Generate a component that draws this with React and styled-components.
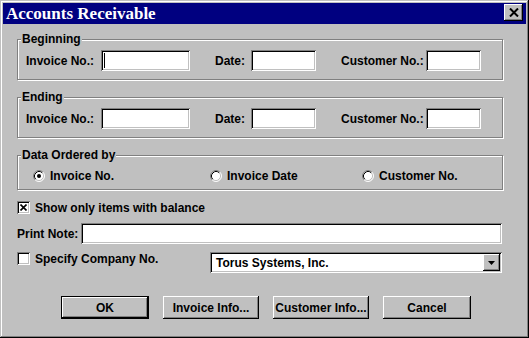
import React from 'react';
import styled, { createGlobalStyle } from 'styled-components';

const GlobalStyle = createGlobalStyle`
  html, body {
    margin: 0;
    padding: 0;
    background: #c0c0c0;
  }
  body {
    font-family: "Liberation Sans", Arial, sans-serif;
  }
`;

const raised = `
  box-shadow: inset -1px -1px #000, inset 1px 1px #fff, inset -2px -2px #808080, inset 2px 2px #c0c0c0;
`;

const sunken = `
  box-shadow: inset 1px 1px #808080, inset -1px -1px #fff, inset 2px 2px #000, inset -2px -2px #c0c0c0;
`;

const Window = styled.div`
  box-sizing: border-box;
  width: 529px;
  height: 338px;
  padding: 3px;
  background: #c0c0c0;
  box-shadow: inset -1px -1px #000, inset 1px 1px #c0c0c0, inset -2px -2px #808080, inset 2px 2px #fff;
  display: flex;
  flex-direction: column;
`;

const TitleBar = styled.div`
  height: 21px;
  background: #000080;
  display: flex;
  align-items: flex-start;
  padding-left: 3px;
`;

const Title = styled.div`
  flex: 1;
  color: #fff;
  font: bold 17px/21px "Liberation Serif", "Times New Roman", serif;
  white-space: nowrap;
`;

const CloseButton = styled.button`
  width: 19px;
  height: 17px;
  margin: 1px 3px 0 0;
  padding: 0;
  border: none;
  background: #c0c0c0;
  display: flex;
  align-items: center;
  justify-content: center;
  ${raised}
`;

const Body = styled.div`
  padding: 15px 23px 0 14px;
  display: flex;
  flex-direction: column;
`;

const Group = styled.section`
  position: relative;
  margin-top: ${(p) => p.$top || 0}px;
  padding: ${(p) => p.$pad};
  border: 1px solid #808080;
  box-shadow: inset 1px 1px #fff, 1px 1px #fff;
`;

const GroupLabel = styled.span`
  position: absolute;
  top: -7px;
  left: 3px;
  padding: 0 1px;
  background: #c0c0c0;
  font-size: 12px;
  font-weight: bold;
  line-height: 13px;
  white-space: nowrap;
`;

const FieldRow = styled.div`
  display: grid;
  grid-template-columns: 75px 114px 36px 90px 85px 55px;
  align-items: center;
  padding-left: 8px;
`;

const Label = styled.span`
  font-size: 12px;
  font-weight: bold;
  line-height: 14px;
  white-space: nowrap;
`;

const TextBox = styled.div`
  position: relative;
  box-sizing: border-box;
  width: ${(p) => (p.$w ? `${p.$w}px` : 'auto')};
  flex: ${(p) => (p.$w ? 'none' : '1')};
  height: 21px;
  background: #fff;
  ${sunken}
`;

const Caret = styled.span`
  position: absolute;
  left: 3px;
  top: 3px;
  width: 1px;
  height: 15px;
  background: #000;
`;

const RadioRow = styled.div`
  display: grid;
  grid-template-columns: 177px 152px auto;
  align-items: center;
  height: 14px;
  padding-left: 15px;
`;

const Option = styled.label`
  display: flex;
  align-items: center;
  gap: 5px;
`;

const CheckItem = styled.label`
  display: flex;
  align-items: center;
  gap: 5px;
  height: 13px;
  margin-top: ${(p) => p.$top || 0}px;
`;

const Box = styled.span`
  box-sizing: border-box;
  width: 13px;
  height: 13px;
  background: #fff;
  display: flex;
  align-items: center;
  justify-content: center;
  ${sunken}
`;

const NoteRow = styled.div`
  display: flex;
  align-items: center;
  gap: 3px;
  margin: 9px 1px 0 0;
`;

const CompanyRow = styled.div`
  display: flex;
  align-items: flex-start;
  justify-content: space-between;
  margin: 8px 1px 0 0;
`;

const Select = styled.div`
  box-sizing: border-box;
  width: 292px;
  height: 21px;
  padding: 0 2px 0 6px;
  background: #fff;
  display: flex;
  align-items: center;
  justify-content: space-between;
  ${sunken}
`;

const DropButton = styled.span`
  box-sizing: border-box;
  width: 17px;
  height: 17px;
  background: #c0c0c0;
  display: flex;
  align-items: center;
  justify-content: center;
  ${raised}
`;

const ButtonRow = styled.div`
  display: flex;
  gap: 14px;
  margin-top: 23px;
  padding-left: 44px;
`;

const Button = styled.button`
  box-sizing: border-box;
  width: ${(p) => p.$w}px;
  height: 23px;
  padding: 0;
  background: #c0c0c0;
  border: ${(p) => (p.$default ? '1px solid #000' : 'none')};
  color: #000;
  font: bold 12px "Liberation Sans", Arial, sans-serif;
  ${raised}
`;

function CloseIcon() {
  return (
    <svg width="10" height="9" viewBox="0 0 10 9">
      <path d="M1 0.5L9 8.5M9 0.5L1 8.5" stroke="#000" strokeWidth="2" fill="none" />
    </svg>
  );
}

function CheckX() {
  return (
    <svg width="7" height="7" viewBox="0 0 7 7">
      <path d="M0.5 0.5L6.5 6.5M6.5 0.5L0.5 6.5" stroke="#000" strokeWidth="1.6" fill="none" />
    </svg>
  );
}

function RadioIcon({ checked }) {
  return (
    <svg width="12" height="12" viewBox="0 0 12 12">
      <circle cx="6" cy="6" r="5" fill="#fff" />
      <path d="M2.11 9.89A5.5 5.5 0 0 1 9.89 2.11" stroke="#808080" fill="none" />
      <path d="M9.89 2.11A5.5 5.5 0 0 1 2.11 9.89" stroke="#fff" fill="none" />
      <path d="M2.82 9.18A4.5 4.5 0 0 1 9.18 2.82" stroke="#000" fill="none" />
      <path d="M9.18 2.82A4.5 4.5 0 0 1 2.82 9.18" stroke="#c0c0c0" fill="none" />
      {checked && <circle cx="6" cy="6" r="2" fill="#000" />}
    </svg>
  );
}

function DownArrow() {
  return (
    <svg width="7" height="4" viewBox="0 0 7 4">
      <polygon points="0,0 7,0 3.5,4" fill="#000" />
    </svg>
  );
}

function RangeGroup({ title, top, caret }) {
  return (
    <Group $top={top} $pad="10px 0 8px">
      <GroupLabel>{title}</GroupLabel>
      <FieldRow>
        <Label>Invoice No.:</Label>
        <TextBox $w={89}>{caret && <Caret />}</TextBox>
        <Label>Date:</Label>
        <TextBox $w={65} />
        <Label>Customer No.:</Label>
        <TextBox $w={55} />
      </FieldRow>
    </Group>
  );
}

const orderOptions = [
  { label: 'Invoice No.', checked: true },
  { label: 'Invoice Date', checked: false },
  { label: 'Customer No.', checked: false },
];

export default function App() {
  return (
    <>
      <GlobalStyle />
      <Window>
        <TitleBar>
          <Title>Accounts Receivable</Title>
          <CloseButton aria-label="Close">
            <CloseIcon />
          </CloseButton>
        </TitleBar>
        <Body>
          <RangeGroup title="Beginning" caret />
          <RangeGroup title="Ending" top={17} />
          <Group $top={17} $pad="13px 0 6px">
            <GroupLabel>Data Ordered by</GroupLabel>
            <RadioRow>
              {orderOptions.map((o) => (
                <Option key={o.label}>
                  <RadioIcon checked={o.checked} />
                  <Label>{o.label}</Label>
                </Option>
              ))}
            </RadioRow>
          </Group>
          <CheckItem $top={11}>
            <Box>
              <CheckX />
            </Box>
            <Label>Show only items with balance</Label>
          </CheckItem>
          <NoteRow>
            <Label>Print Note:</Label>
            <TextBox />
          </NoteRow>
          <CompanyRow>
            <CheckItem>
              <Box />
              <Label>Specify Company No.</Label>
            </CheckItem>
            <Select>
              <Label>Torus Systems, Inc.</Label>
              <DropButton>
                <DownArrow />
              </DropButton>
            </Select>
          </CompanyRow>
          <ButtonRow>
            <Button $w={88} $default>OK</Button>
            <Button $w={96}>Invoice Info...</Button>
            <Button $w={96}>Customer Info...</Button>
            <Button $w={88}>Cancel</Button>
          </ButtonRow>
        </Body>
      </Window>
    </>
  );
}
